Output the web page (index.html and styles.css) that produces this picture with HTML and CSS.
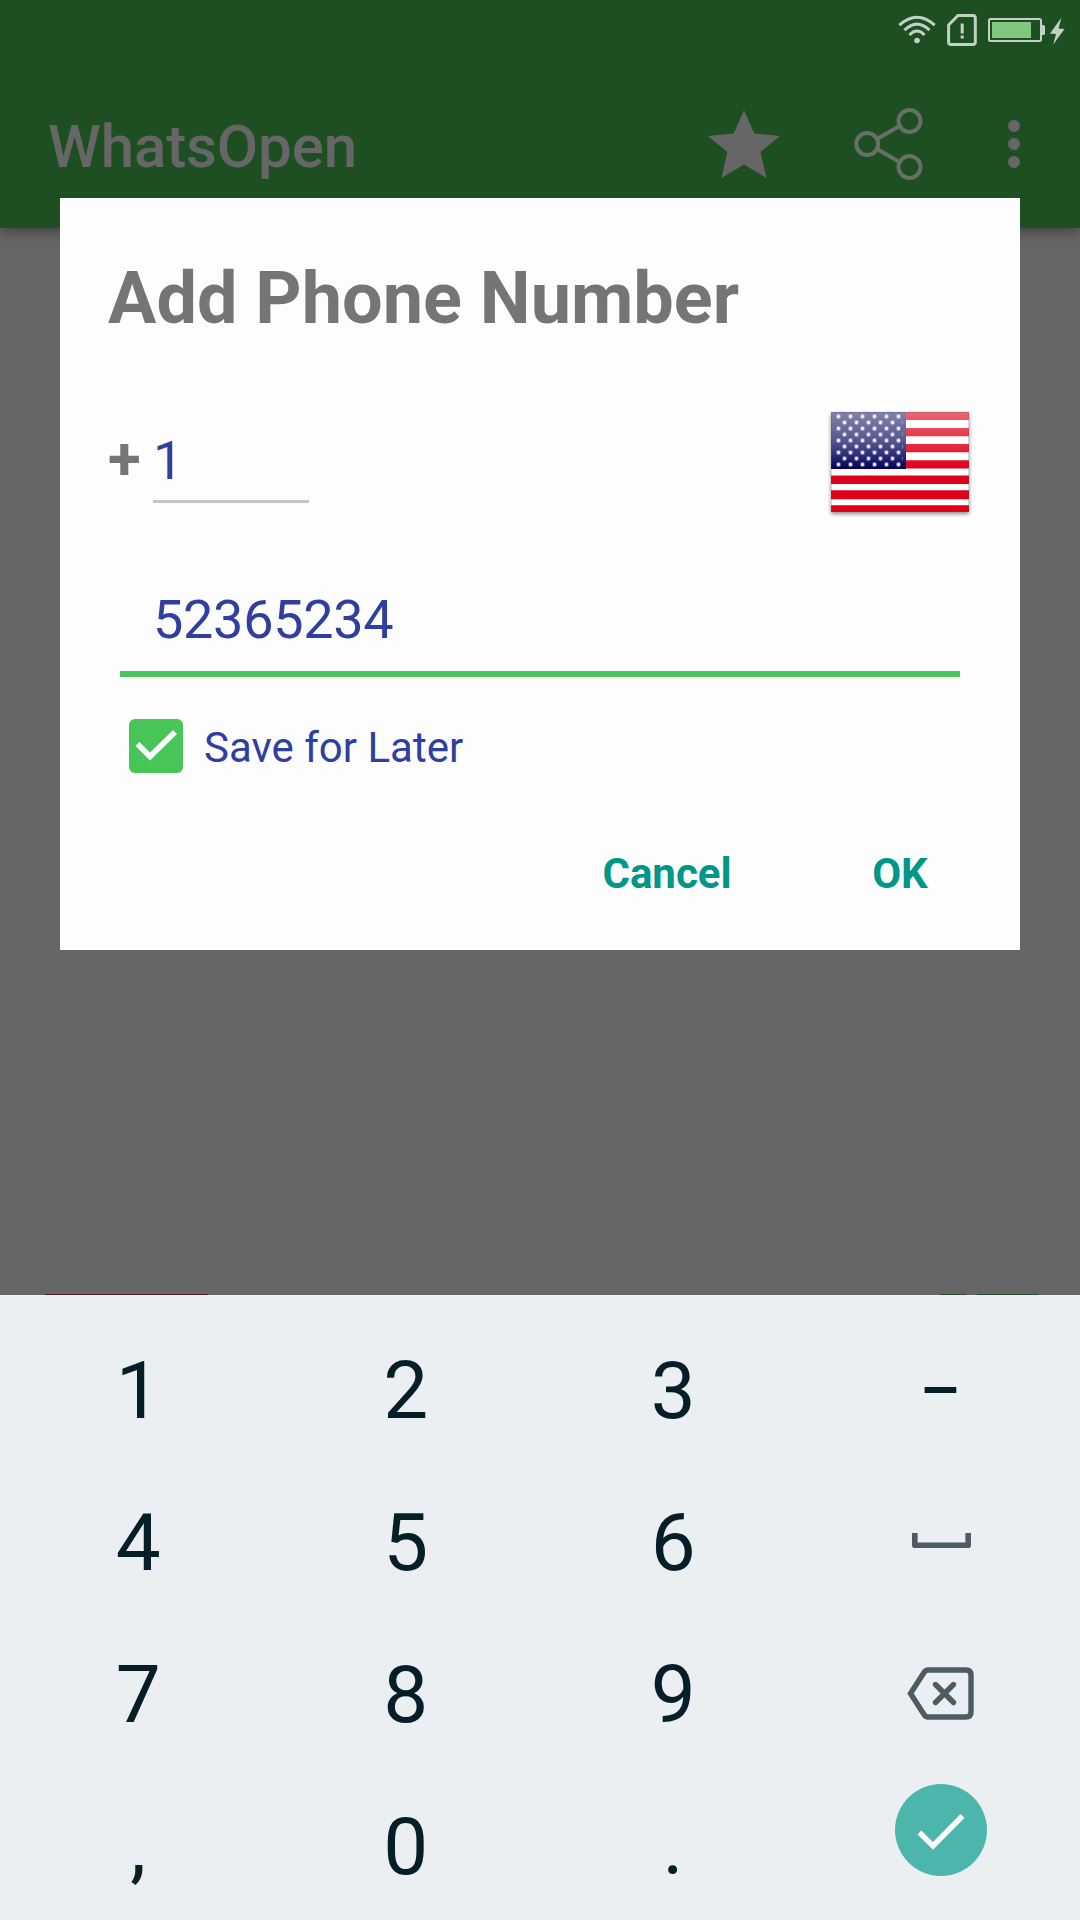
FILE: index.html
```html
<!DOCTYPE html>
<html lang="en">
<head>
<meta charset="utf-8">
<title>WhatsOpen</title>
<link rel="stylesheet" href="styles.css">
</head>
<body>
<div class="screen">
  <header class="top">
    <div class="status">
      <svg class="wifi" width="38" height="30" viewBox="0 0 38 30" fill="none" stroke="#c3d0c4" stroke-width="3">
        <path d="M1.3 10.2Q19-5.8 36.700 10.200M6.500 15.200Q19 3.200 31.500 15.200M11.500 20Q19 12.200 26.500 20"/>
        <circle cx="19" cy="25.500" r="2.800" fill="#c3d0c4" stroke="none"/>
      </svg>
      <svg class="sim" width="30" height="32" viewBox="0 0 30 32" fill="none" stroke="#c3d0c4" stroke-width="3">
        <path d="M11 1.500H26Q28.300 1.500 28.300 4V28Q28.300 30.500 26 30.500H4Q1.600 30.500 1.600 28V11Z"/>
        <path d="M15.200 9.500V19.500M15.200 21.500V24.500"/>
      </svg>
      <svg class="battery" width="57" height="24" viewBox="0 0 57 24">
        <rect x="1" y="1" width="52" height="22" rx="1.500" fill="none" stroke="#c3d0c4" stroke-width="2"/>
        <rect x="4" y="4" width="39" height="16" fill="#80c67f"/>
        <path d="M54 7h1.500q1.500 0 1.500 1.500v7q0 1.500-1.500 1.500H54z" fill="#c3d0c4"/>
      </svg>
      <svg class="bolt" width="15" height="28" viewBox="0 0 15 28" fill="#c3d0c4">
        <path d="M11.500.5 0 16.500 6 17 3.200 27.500 14.500 12 8.500 11.500Z"/>
      </svg>
    </div>
    <div class="appbar">
      <h1 class="brand">WhatsOpen</h1>
      <svg class="star" width="72" height="68" viewBox="0 0 72 68" fill="#666">
        <path d="M36 0 46.300 23.500 72 26 52.500 42 58.500 68 36 54.500 13.500 68 19.300 42 0 26 25.700 23.500Z"/>
      </svg>
      <svg class="share" width="70" height="72" viewBox="0 0 70 72" fill="none" stroke="#667066" stroke-width="4">
        <circle cx="13.200" cy="36" r="11"/><circle cx="55.500" cy="13" r="11"/><circle cx="55.500" cy="59" r="11"/>
        <path d="M23 31 45.500 18M23 41 45.500 54"/>
      </svg>
      <svg class="more" width="12" height="48" viewBox="0 0 12 48" fill="#666">
        <circle cx="6" cy="6" r="6"/><circle cx="6" cy="24" r="6"/><circle cx="6" cy="42" r="6"/>
      </svg>
    </div>
  </header>
  <main class="content">
    <div class="peek">
      <span class="peek-red"></span>
      <span class="peek-green-small"></span>
      <span class="peek-green"></span>
    </div>
  </main>
  <section class="keyboard">
    <span class="key">1</span><span class="key">2</span><span class="key">3</span><span class="key dash-key">–</span>
    <span class="key">4</span><span class="key">5</span><span class="key">6</span>
    <span class="key space-key">
      <svg width="59" height="15" viewBox="0 0 59 15" fill="none" stroke="#4d5c63" stroke-width="5.600" stroke-linejoin="round">
        <path d="M2.800 0V12.200H56.200V0"/>
      </svg>
    </span>
    <span class="key">7</span><span class="key">8</span><span class="key">9</span>
    <span class="key delete-key">
      <svg width="67" height="53" viewBox="0 0 67 53" fill="none" stroke="#4d5c63" stroke-width="5.400">
        <path d="M21 3H59Q64 3 64 8V45Q64 50 59 50H21Q18.500 50 17 47.500L3.500 26.500 17 5.500Q18.500 3 21 3Z"/>
        <path d="M28.500 17.500 46.500 35.500M46.500 17.500 28.500 35.500" stroke-linecap="round"/>
      </svg>
    </span>
    <span class="key">,</span><span class="key">0</span><span class="key">.</span>
    <span class="key enter-key">
      <svg width="92" height="92" viewBox="0 0 92 92">
        <circle cx="46" cy="46" r="46" fill="#4db6ac"/>
        <path d="M24.500 48.500 38 62 67.500 32" fill="none" stroke="#fff" stroke-width="5.400"/>
      </svg>
    </span>
  </section>

  <div class="dialog">
    <h2 class="title">Add Phone Number</h2>
    <div class="country">
      <span class="plus">+</span>
      <span class="code">1</span>
      <svg class="flag" width="138" height="100" viewBox="0 0 138 100">
        <defs>
          <linearGradient id="gloss" x1="0" y1="0" x2="0" y2="1">
            <stop offset="0" stop-color="#fff" stop-opacity=".4"/>
            <stop offset="1" stop-color="#fff" stop-opacity="0"/>
          </linearGradient>
          <linearGradient id="canton" x1="0" y1="0" x2="0" y2="1">
            <stop offset="0" stop-color="#2d2f70"/>
            <stop offset=".5" stop-color="#2b2d75"/>
            <stop offset="1" stop-color="#00005c"/>
          </linearGradient>
          <pattern id="stars" width="12" height="12" patternUnits="userSpaceOnUse" x="1.500" y="-1.500">
            <circle cx="6" cy="6" r="1.900" fill="#fff"/>
            <circle cx="0" cy="12" r="1.900" fill="#fff"/>
            <circle cx="12" cy="12" r="1.900" fill="#fff"/>
            <circle cx="0" cy="0" r="1.900" fill="#fff"/>
            <circle cx="12" cy="0" r="1.900" fill="#fff"/>
          </pattern>
        </defs>
        <rect width="138" height="100" fill="#fff"/>
        <path d="M0 0h138v8H0zM0 16h138v8.300H0zM0 32h138v8.300H0zM0 48.300h138v8.300H0zM0 63.500h138v8.500H0zM0 78.300h138v9H0zM0 93.300h138v6.700H0z" fill="#df0019"/>
        <rect width="75" height="57" fill="url(#canton)"/>
        <rect x="4" y="2" width="68" height="53" fill="url(#stars)"/>
        <rect width="138" height="57" fill="url(#gloss)"/>
        <rect x=".5" y=".5" width="137" height="99" fill="none" stroke="#555" stroke-opacity=".25"/>
      </svg>
    </div>
    <div class="number">52365234</div>
    <div class="save">
      <svg class="box" width="54" height="54" viewBox="0 0 54 54">
        <rect width="54" height="54" rx="6" fill="#47c556"/>
        <path d="M8.500 25 21 37.500 46 13" fill="none" stroke="#fff" stroke-width="5.600"/>
      </svg>
      <span class="save-label">Save for Later</span>
    </div>
    <div class="actions">
      <span class="btn cancel">Cancel</span>
      <span class="btn ok">OK</span>
    </div>
  </div>
</div>
</body>
</html>
```
FILE: styles.css
```css
* { box-sizing: border-box; }
body { margin: 0; font-family: Roboto, sans-serif; }
h1, h2 { margin: 0; }
svg { display: block; flex: none; }

.screen {
  position: relative;
  width: 1080px;
  height: 1920px;
  overflow: hidden;
  display: flex;
  flex-direction: column;
  background: #666;
}

.top {
  flex: none;
  height: 228px;
  background: #1e4f22;
  box-shadow: 0 3px 12px rgba(0, 0, 0, .4);
}
.status {
  height: 60px;
  display: flex;
  justify-content: flex-end;
  align-items: flex-start;
  padding: 14px 15px 0 0;
}
.wifi { margin: 1px 11px 0 0; }
.sim { margin-right: 11px; }
.battery { margin: 4px 5px 0 0; }
.bolt { margin-top: 3px; }

.appbar {
  height: 168px;
  display: flex;
  align-items: center;
  padding: 0 60px 0 48px;
}
.brand {
  flex: 1;
  font-size: 60px;
  font-weight: 500;
  line-height: 72px;
  letter-spacing: -.1px;
  color: #666;
  padding-top: 5px;
}
.star { margin-right: 74px; }
.share { margin-right: 84px; }

.content {
  flex: none;
  height: 1067px;
  display: flex;
  flex-direction: column;
  justify-content: flex-end;
}
.peek { display: flex; height: 1px; padding-left: 45px; }
.peek-red { width: 163px; background: #4c1d23; }
.peek-green-small { width: 26px; margin-left: 732px; background: #2b4b2f; }
.peek-green { width: 61px; margin-left: 11px; background: #2b4b2f; }

.keyboard {
  flex: none;
  height: 648px;
  display: grid;
  grid-template-columns: repeat(4, 267.5px);
  grid-auto-rows: 152px;
  padding: 20px 5.600px 0 4.400px;
  background: #ebeff2;
}
.key {
  display: flex;
  align-items: center;
  justify-content: center;
  font-size: 80px;
  line-height: 94px;
  color: #051e28;
}
.dash-key { transform: scaleX(.81); }
.space-key { padding: 0 0 5px 1px; }
.delete-key { padding-bottom: 3px; }
.enter-key { padding: 0 0 34px 1px; }

.dialog {
  position: absolute;
  left: 60px;
  top: 198px;
  width: 960px;
  height: 752px;
  padding: 59px 48px 0;
  background: #fdfdfd;
}
.title {
  font-size: 72px;
  font-weight: 700;
  line-height: 84px;
  color: #757575;
  white-space: nowrap;
}
.country {
  display: flex;
  align-items: flex-start;
  height: 100px;
  margin-top: 71px;
}
.plus {
  width: 45px;
  padding-top: 15px;
  font-size: 60px;
  font-weight: 700;
  line-height: 64px;
  color: #757575;
}
.code {
  width: 156px;
  margin-top: 17px;
  padding-bottom: 7px;
  border-bottom: 3px solid #c4c4c4;
  font-size: 54px;
  line-height: 64px;
  color: #303f9f;
}
.flag {
  margin-left: auto;
  margin-right: 3px;
  box-shadow: 0 2px 4px rgba(0, 0, 0, .45);
}
.number {
  margin: 76px 12px 0;
  padding: 0 0 19px 33px;
  border-bottom: 6px solid #4bc45d;
  font-size: 54px;
  line-height: 64px;
  letter-spacing: -.3px;
  color: #303f9f;
}
.save {
  display: flex;
  align-items: center;
  height: 54px;
  margin: 42px 0 0 21px;
}
.save-label {
  margin-left: 21px;
  padding-top: 3px;
  font-size: 42px;
  line-height: 50px;
  color: #303f9f;
}
.actions {
  display: flex;
  justify-content: flex-end;
  gap: 61px;
  margin-top: 76px;
}
.btn {
  font-size: 42px;
  font-weight: 700;
  line-height: 50px;
  text-align: center;
  color: #009688;
}
.cancel { width: 200px; }
.ok { width: 144px; }
```
